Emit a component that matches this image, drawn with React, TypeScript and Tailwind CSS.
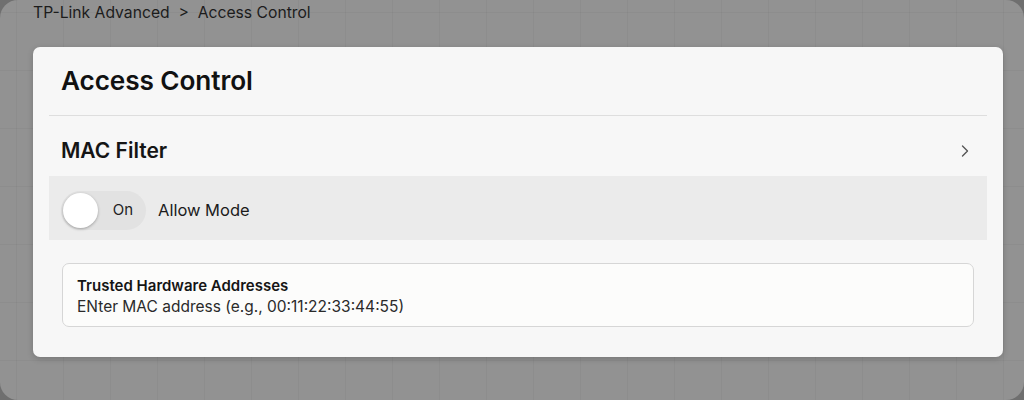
import { ChevronRight } from "lucide-react";

const App = () => {
  return (
    <div className="w-[1024px] h-[400px] bg-[#6f6f6f] font-['Inter','Noto_Sans',sans-serif]">
      <div className="w-full h-full rounded-[18px] overflow-hidden bg-[#929292] bg-[linear-gradient(to_right,rgba(0,0,0,0.035)_1px,transparent_1px),linear-gradient(to_bottom,rgba(0,0,0,0.035)_1px,transparent_1px)] bg-[size:47px_58px] bg-[position:16px_12px] flex flex-col px-[33px]">
        <div className="h-[47px] pt-[1px] text-[15.7px] text-[#1c1c1c]">
          TP-Link Advanced&nbsp;&nbsp;&gt;&nbsp;&nbsp;Access Control
        </div>
        <div className="w-[970px] h-[310px] rounded-[7px] bg-[#f7f7f7] shadow-[0_2px_6px_rgba(0,0,0,0.18)] px-4 flex flex-col">
          <div className="h-[69px] flex items-center px-3 border-b border-[#dedede]">
            <h1 className="text-[26.2px] font-semibold text-[#111] tracking-[-0.1px]">
              Access Control
            </h1>
          </div>
          <div className="h-[60px] flex items-center justify-between px-3 pt-[10px]">
            <h2 className="text-[21px] font-semibold text-[#151515]">
              MAC Filter
            </h2>
            <ChevronRight className="w-5 h-5 text-[#555]" strokeWidth={1.6} />
          </div>
          <div className="h-[64px] bg-[#ebebeb] flex items-center px-3 gap-3 pt-[4px]">
            <div className="w-[85px] h-[39px] rounded-full bg-[#e2e2e2] flex items-center pl-[2px] pr-[13px] justify-between">
              <div className="w-[35px] h-[35px] rounded-full bg-white shadow-[0_1px_3px_rgba(0,0,0,0.3)]" />
              <span className="text-[15px] text-[#222]">On</span>
            </div>
            <span className="text-[16.5px] text-[#1c1c1c]">Allow Mode</span>
          </div>
          <div className="px-[13px] pt-[23px]">
            <div className="h-[64px] rounded-[7px] border border-[#d6d6d6] bg-[#fcfcfb] px-[14px] pt-[3px] flex flex-col justify-center">
              <div className="text-[15px] font-semibold text-[#151515] leading-[20px]">
                Trusted Hardware Addresses
              </div>
              <div className="text-[15.5px] text-[#2a2a2a] leading-[21px]">
                ENter MAC address (e.g., 00:11:22:33:44:55)
              </div>
            </div>
          </div>
        </div>
      </div>
    </div>
  );
};

export default App;
